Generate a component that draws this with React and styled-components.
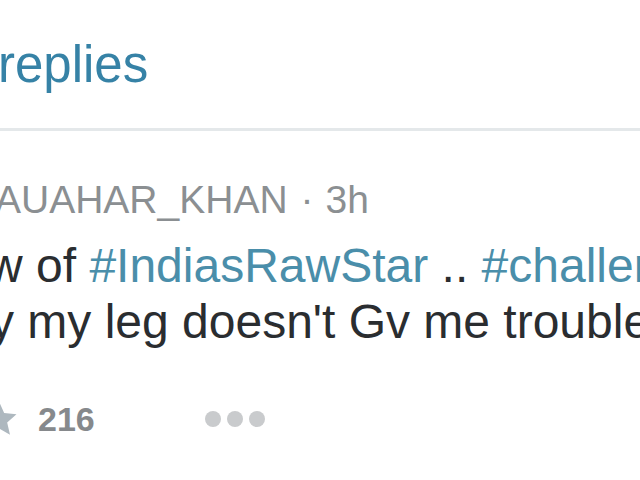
import styled, { createGlobalStyle } from "styled-components";

const GlobalStyle = createGlobalStyle`
    html, body {
        margin: 0;
        padding: 0;
        background: #ffffff;
    }
`

const Page = styled.div`
    width: 640px;
    height: 480px;
    overflow: hidden;
    background: #ffffff;
    font-family: "Liberation Sans", Arial, sans-serif;
    white-space: nowrap;
`

const RepliesLink = styled.div`
    height: 131px;
    box-sizing: border-box;
    padding-top: 37px;
    margin-left: -2px;
    font-size: 51px;
    line-height: 56px;
    color: #3682a6;
    border-bottom: 3px solid #e4e8ea;
`

const Tweet = styled.div`
    padding-top: 47px;
`

const Header = styled.div`
    margin-left: -5px;
    font-size: 39px;
    line-height: 44px;
    color: #8b8f92;
`

const Sep = styled.span`
    margin: 0 12px 0 13px;
`

const Body = styled.div`
    margin-top: 16px;
    font-size: 48px;
    line-height: 56px;
    color: #2a2d30;
`

const Line = styled.div`
    margin-left: ${props => props.$shift}px;
`

const Hashtag = styled.span`
    color: #4a8eaa;
`

const Actions = styled.div`
    display: flex;
    align-items: center;
    margin-top: 49px;
    height: 40px;
`

const Fav = styled.div`
    display: flex;
    align-items: center;
    gap: 18px;
    margin-left: -22px;
    font-size: 34px;
    font-weight: bold;
    color: #86898c;
`

const More = styled.div`
    display: flex;
    gap: 6px;
    margin-left: 110px;
`

const Dot = styled.span`
    width: 16px;
    height: 16px;
    border-radius: 50%;
    background: #c9cbcd;
`

export default function App () {

    return (
        <Page>
            <GlobalStyle />
            <RepliesLink>replies</RepliesLink>
            <Tweet>
                <Header>AUAHAR_KHAN<Sep>·</Sep>3h</Header>
                <Body>
                    <Line $shift={-12}>w of <Hashtag>#IndiasRawStar</Hashtag> .. <Hashtag>#challenge</Hashtag></Line>
                    <Line $shift={-10}>y my leg doesn't Gv me trouble</Line>
                </Body>
                <Actions>
                    <Fav>
                        <svg width="42" height="40" viewBox="0 0 24 24">
                            <path d="M12 1.5l3.1 6.9 7.4.7-5.6 5 1.7 7.4L12 17.6l-6.6 3.9 1.7-7.4-5.6-5 7.4-.7z" fill="#aeb8bf" />
                        </svg>
                        <span>216</span>
                    </Fav>
                    <More>
                        <Dot />
                        <Dot />
                        <Dot />
                    </More>
                </Actions>
            </Tweet>
        </Page>
    )
}
